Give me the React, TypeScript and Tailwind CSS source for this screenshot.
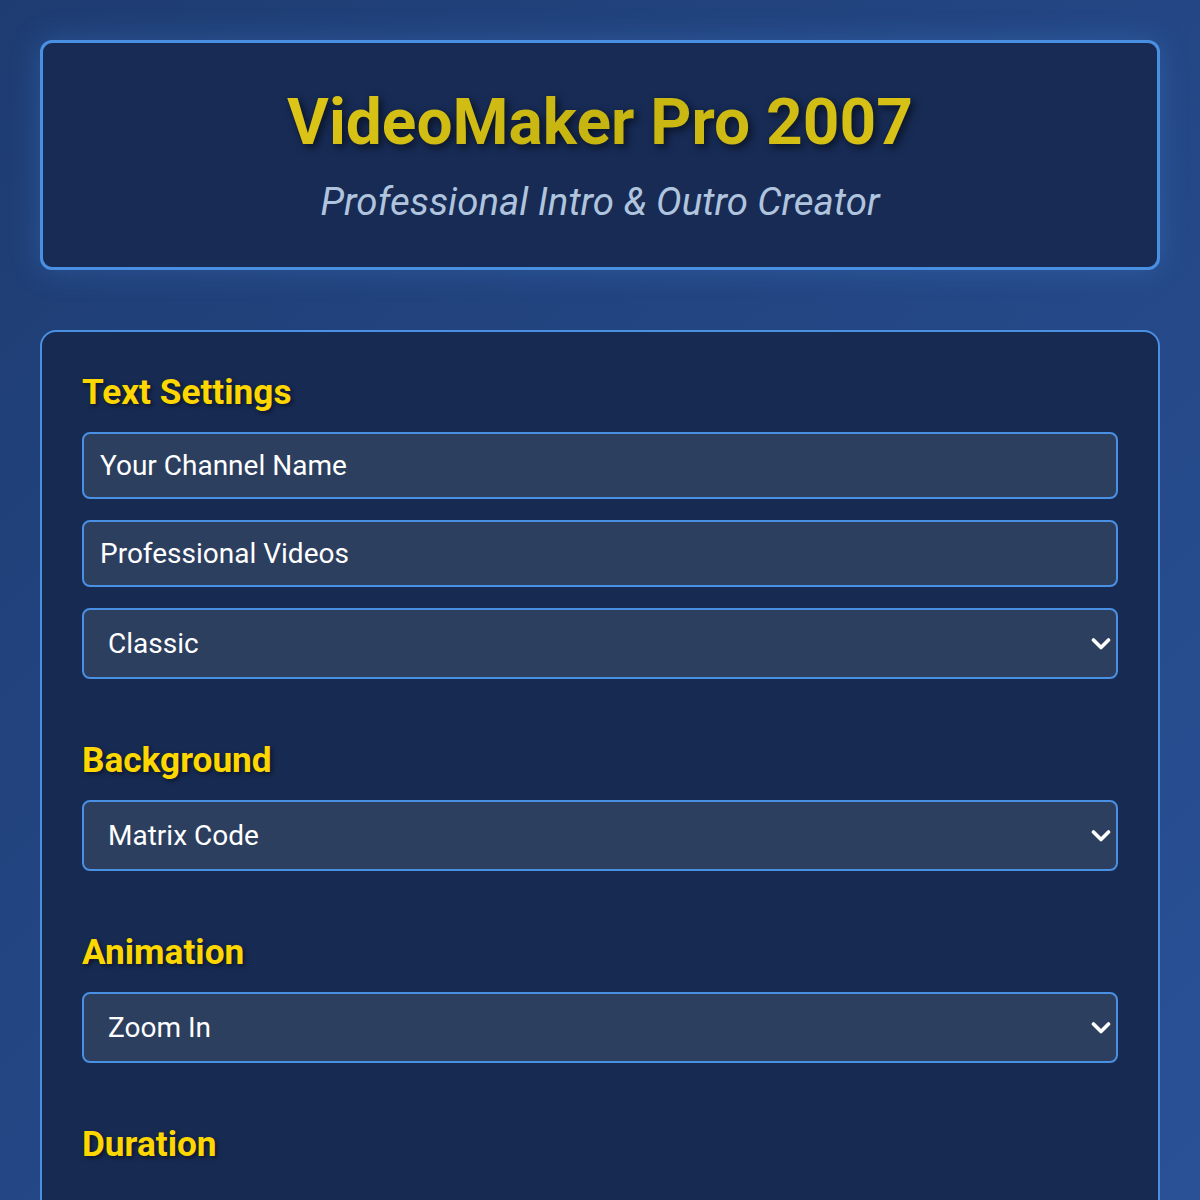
const font = { fontFamily: "Roboto, 'Liberation Sans', sans-serif" };

function Heading({ children, className = "" }: { children: React.ReactNode; className?: string }) {
  return (
    <h2
      className={`text-[35.2px] font-bold leading-[44px] text-[#ffd700] [text-shadow:2px_2px_4px_rgba(0,0,0,0.5)] ${className}`}
    >
      {children}
    </h2>
  );
}

function TextField({ value }: { value: string }) {
  return (
    <input
      defaultValue={value}
      className="h-[67px] w-full rounded-lg border-2 border-[#4a90e2] bg-[#2d3f5f] px-4 text-[28px] text-white outline-none"
    />
  );
}

function Select({ value, options }: { value: string; options: string[] }) {
  return (
    <div className="relative">
      <select
        defaultValue={value}
        className="h-[71px] w-full appearance-none rounded-lg border-2 border-[#4a90e2] bg-[#2d3f5f] px-6 text-[28px] text-white outline-none"
      >
        {options.map((o) => (
          <option key={o}>{o}</option>
        ))}
      </select>
      <svg
        width="20"
        height="13"
        viewBox="0 0 20 13"
        className="pointer-events-none absolute right-[7px] top-1/2 -translate-y-1/2"
      >
        <path d="M2.5 2.5 L10 10 L17.5 2.5" fill="none" stroke="#fff" strokeWidth="3.6" strokeLinecap="round" strokeLinejoin="round" />
      </svg>
    </div>
  );
}

export default function App() {
  return (
    <div
      style={font}
      className="min-h-[1200px] bg-[linear-gradient(135deg,#1e3c72_0%,#2a5298_100%)] px-10 pt-10"
    >
      {/* 헤더 */}
      <header className="rounded-xl border-[3px] border-[#4a90e2] bg-[#172b55] py-[42px] text-center shadow-[0_0_30px_rgba(74,144,226,0.3)]">
        <h1 className="bg-[linear-gradient(135deg,#f0d41c_0%,#c6b410_50%,#ead01c_100%)] bg-clip-text text-[64px] font-bold leading-[76px] text-transparent [filter:drop-shadow(3px_3px_4px_rgba(0,0,0,0.6))]">
          VideoMaker Pro 2007
        </h1>
        <p className="mt-[18px] text-[38.4px] italic leading-[46px] text-[#b0c4de]">
          Professional Intro &amp; Outro Creator
        </p>
      </header>

      {/* 설정 패널 */}
      <main className="mt-[60px] rounded-2xl border-2 border-[#4a90e2] bg-[#172a52] px-10 pb-10 pt-[38px]">
        <section>
          <Heading className="mb-[18px]">Text Settings</Heading>
          <div className="flex flex-col gap-[21px]">
            <TextField value="Your Channel Name" />
            <TextField value="Professional Videos" />
            <Select value="Classic" options={["Classic", "Modern", "Retro", "Neon"]} />
          </div>
        </section>

        <section className="mt-[59px]">
          <Heading className="mb-[18px]">Background</Heading>
          <Select value="Matrix Code" options={["Matrix Code", "Starfield", "Gradient", "Solid"]} />
        </section>

        <section className="mt-[59px]">
          <Heading className="mb-[18px]">Animation</Heading>
          <Select value="Zoom In" options={["Zoom In", "Fade", "Slide", "Spin"]} />
        </section>

        <section className="mt-[59px]">
          <Heading>Duration</Heading>
          <div className="mt-10 flex items-center gap-4">
            <input type="range" min={3} max={10} defaultValue={5} className="w-full accent-[#ffd700]" />
            <span className="text-[28px] text-white">5s</span>
          </div>
        </section>
      </main>
    </div>
  );
}
